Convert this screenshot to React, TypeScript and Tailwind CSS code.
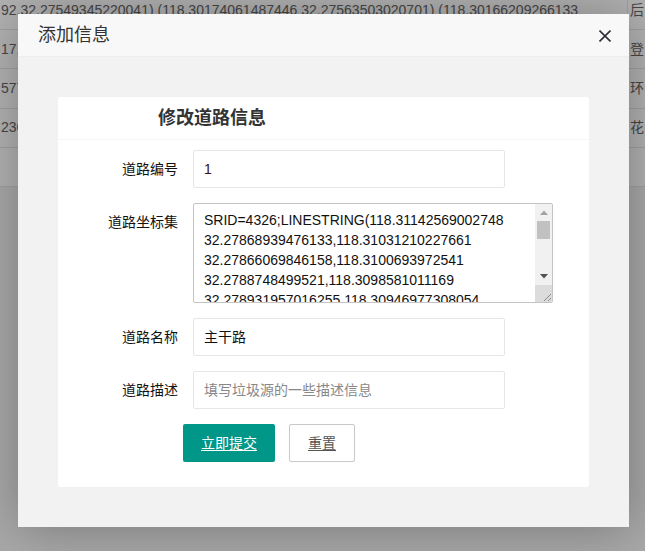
import React from "react";

const rows = [
  { left: "92,32.27549345220041) (118.30174061487446 32.27563503020701) (118.30166209266133", right: "后" },
  { left: "17,32.27868939476133,118.31031210227661 32.27866069846158", right: "登" },
  { left: "577,32.2788748499521,118.3098581011169 32.278931957016255", right: "环" },
  { left: "236,32.27549345220041,118.30174061487446 32.27563503020701", right: "花" },
  { left: "", right: "" },
];

const coords =
  "SRID=4326;LINESTRING(118.31142569002748 32.27868939476133,118.31031210227661 32.27866069846158,118.3100693972541 32.2788748499521,118.3098581011169 32.278931957016255,118.30946977308054 32.27901372617661,118.30895712971687 32.27906391331554,118.30844448635319 32.27911410045447)";

export default function App() {
  return (
    <div className="relative w-[645px] h-[551px] overflow-hidden bg-[#f2f2f2] font-['Liberation_Sans','Noto_Sans_CJK_SC',sans-serif] text-[14px] text-[#333]">
      {/* background table */}
      <div className="flex flex-col -mt-[9px] bg-white">
        {rows.map((r, i) => (
          <div key={i} className="flex h-[39.2px] border-b border-[#e6e6e6]">
            <div className="w-[628px] overflow-hidden whitespace-nowrap pl-[1px] flex items-center text-[#666] border-r border-[#e6e6e6]">
              {r.left}
            </div>
            <div className="flex-1 flex items-center pl-[2px] text-[#666] whitespace-nowrap overflow-hidden">{r.right}</div>
          </div>
        ))}
      </div>

      {/* shade */}
      <div className="absolute inset-0 bg-black/30" />

      {/* dialog */}
      <div className="absolute left-[18px] top-[14px] w-[611px] h-[513px] flex flex-col bg-white shadow-[1px_1px_50px_rgba(0,0,0,0.3)]">
        <div className="h-[43px] shrink-0 flex items-center justify-between pl-[20px] pr-[18px] bg-[#f8f8f8] border-b border-[#eee]">
          <span className="text-[18px] text-[#333] leading-none">添加信息</span>
          <svg width="12" height="12" viewBox="0 0 12 12" className="mt-[1px]">
            <path d="M0.5 0.5L11.5 11.5M11.5 0.5L0.5 11.5" stroke="#2e2e3a" strokeWidth="1.6" />
          </svg>
        </div>
        <div className="flex-1 bg-[#f2f2f2] p-[40px]">
          <div className="h-full bg-white rounded-[2px] flex flex-col">
            <div className="h-[43px] shrink-0 flex items-center pl-[100px] border-b border-[#f6f6f6]">
              <span className="text-[18px] font-bold text-[#333]">修改道路信息</span>
            </div>
            <div className="flex flex-col gap-[15px] pt-[10px]">
              <div className="flex items-start">
                <div className="w-[120px] h-[38px] flex items-center justify-end text-[#111]">道路编号</div>
                <div className="ml-[15px] w-[312px] h-[38px] border border-[#e6e6e6] rounded-[2px] flex items-center pl-[10px] text-[#3a1010]">
                  1
                </div>
              </div>
              <div className="flex items-start">
                <div className="w-[120px] h-[38px] flex items-center justify-end text-[#111]">道路坐标集</div>
                <div className="ml-[15px] w-[360px] h-[100px] border border-[#c4c4c4] rounded-[2px] flex overflow-hidden">
                  <textarea
                    readOnly
                    defaultValue={coords}
                    className="flex-1 h-full px-[10px] py-[6px] leading-[20px] text-[14px] text-[#111] resize-none outline-none overflow-hidden font-['Liberation_Sans',sans-serif]"
                  />
                  <div className="w-[17px] h-full flex flex-col bg-[#f1f1f1]">
                    <div className="h-[17px] flex items-center justify-center">
                      <svg width="8" height="5" viewBox="0 0 8 5">
                        <path d="M0 5L4 0.5L8 5Z" fill="#a3a3a3" />
                      </svg>
                    </div>
                    <div className="flex-1 px-[2px]">
                      <div className="h-[18px] bg-[#c1c1c1]" />
                    </div>
                    <div className="h-[17px] flex items-center justify-center">
                      <svg width="8" height="5" viewBox="0 0 8 5">
                        <path d="M0 0L4 4.5L8 0Z" fill="#505050" />
                      </svg>
                    </div>
                    <div className="h-[17px] bg-[#dcdcdc] flex items-end justify-end">
                      <svg width="10" height="10" viewBox="0 0 10 10">
                        <path d="M2 9L9 2M6 9L9 6" stroke="#8a8a8a" strokeWidth="1" />
                      </svg>
                    </div>
                  </div>
                </div>
              </div>
              <div className="flex items-start">
                <div className="w-[120px] h-[38px] flex items-center justify-end text-[#111]">道路名称</div>
                <div className="ml-[15px] w-[312px] h-[38px] border border-[#e6e6e6] rounded-[2px] flex items-center pl-[10px] text-[#111]">
                  主干路
                </div>
              </div>
              <div className="flex items-start">
                <div className="w-[120px] h-[38px] flex items-center justify-end text-[#111]">道路描述</div>
                <div className="ml-[15px] w-[312px] h-[38px] border border-[#e6e6e6] rounded-[2px] flex items-center pl-[10px] text-[#888]">
                  填写垃圾源的一些描述信息
                </div>
              </div>
              <div className="flex items-start pl-[125px]">
                <div className="h-[38px] px-[18px] flex items-center bg-[#009688] text-white rounded-[2px] underline underline-offset-2">
                  立即提交
                </div>
                <div className="ml-[14px] h-[38px] px-[18px] flex items-center bg-white border border-[#c9c9c9] text-[#555] rounded-[2px] underline underline-offset-2">
                  重置
                </div>
              </div>
            </div>
          </div>
        </div>
      </div>
    </div>
  );
}
